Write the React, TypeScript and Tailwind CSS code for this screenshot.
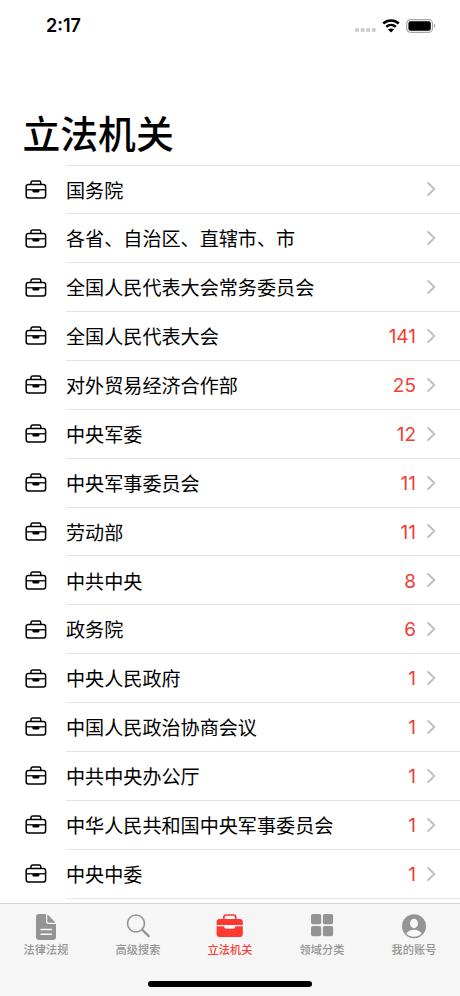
type Organ = { name: string; count?: number };

const Organs: Organ[] = [
  { name: "国务院" },
  { name: "各省、自治区、直辖市、市" },
  { name: "全国人民代表大会常务委员会" },
  { name: "全国人民代表大会", count: 141 },
  { name: "对外贸易经济合作部", count: 25 },
  { name: "中央军委", count: 12 },
  { name: "中央军事委员会", count: 11 },
  { name: "劳动部", count: 11 },
  { name: "中共中央", count: 8 },
  { name: "政务院", count: 6 },
  { name: "中央人民政府", count: 1 },
  { name: "中国人民政治协商会议", count: 1 },
  { name: "中共中央办公厅", count: 1 },
  { name: "中华人民共和国中央军事委员会", count: 1 },
  { name: "中央中委", count: 1 },
];

const BriefcaseIcon = () => (
  <svg width="22" height="20" viewBox="0 0 22 20" fill="none" stroke="black" strokeWidth="1.5">
    <rect x="1.2" y="4.6" width="19.4" height="13.4" rx="2.2" />
    <path d="M6 4.4V2.8c0-1.1.6-1.7 1.7-1.7h6.4c1.1 0 1.7.6 1.7 1.7v1.6" />
    <path d="M1.2 9.8h19.4" strokeWidth="1.3" />
    <path d="M7.4 9.8h7v1.5c0 .7-.4 1.1-1.1 1.1H8.5c-.7 0-1.1-.4-1.1-1.1z" fill="black" stroke="none" />
  </svg>
);

const Chevron = () => (
  <svg width="9" height="14" viewBox="0 0 9 14" fill="none" stroke="#c0c0c3" strokeWidth="2">
    <path d="M1.2 1l6.1 6-6.1 6" strokeLinecap="round" strokeLinejoin="round" />
  </svg>
);

const StatusBar = () => (
  <div className="flex h-[52px] shrink-0 items-center justify-between pr-6 pl-[46px]">
    <span className="text-[18px] leading-none font-semibold">2:17</span>
    <div className="flex items-center">
      <svg width="22" height="6" viewBox="0 0 22 6" fill="#cfcfcf" className="mt-[7px] mr-[5px]">
        <rect x="0" y="1" width="4" height="4" rx="1.3" />
        <rect x="5.6" y="1" width="4" height="4" rx="1.3" />
        <rect x="11.2" y="1" width="4" height="4" rx="1.3" />
        <rect x="16.8" y="1" width="4" height="4" rx="1.3" />
      </svg>
      <svg width="18" height="14" viewBox="0 0 18 14" className="mr-[6px]">
        <path d="M1.2 4.5c4.3-4 11.3-4 15.6 0M4.2 7.9c2.8-2.5 6.8-2.5 9.6 0" fill="none" stroke="black" strokeWidth="2.6" />
        <path d="M9 13.6l-3-3.1c1.7-1.5 4.3-1.5 6 0z" />
      </svg>
      <svg width="30" height="14" viewBox="0 0 30 14">
        <rect x="0.7" y="0.7" width="25.8" height="12.6" rx="3.8" fill="none" stroke="#a6a6a6" strokeWidth="1.2" />
        <rect x="2.4" y="2.3" width="22.4" height="9.4" rx="2.2" />
        <path d="M28 4.8c1.8.7 1.8 3.7 0 4.4z" fill="#a6a6a6" />
      </svg>
    </div>
  </div>
);

const OrganRow = ({ name, count }: Organ) => (
  <li className="flex h-[48.89px] items-stretch">
    <div className="flex w-[66px] shrink-0 items-center pl-[25px]">
      <BriefcaseIcon />
    </div>
    <div className="flex flex-1 items-center border-b border-[#e4e4e6] pr-6">
      <span className="flex-1 pt-[3px] text-[19.1px] whitespace-nowrap">{name}</span>
      <span className="mr-[11px] pt-[3px] text-[19px] text-[#f03d35]">{count}</span>
      <Chevron />
    </div>
  </li>
);

const Tabs = [
  {
    label: "法律法规",
    icon: (
      <svg width="20" height="26" viewBox="0 0 20 26">
        <path d="M3 0h7v7.6C10 9 11 10 12.4 10H20v13a3 3 0 0 1-3 3H3a3 3 0 0 1-3-3V3a3 3 0 0 1 3-3z" fill="currentColor" />
        <path d="M11.3.3L19.7 8.8h-7.2c-.8 0-1.2-.4-1.2-1.2z" fill="currentColor" />
        <path d="M5 15.5h10.5M5 20.3h10.5" stroke="#f6f6f6" strokeWidth="1.5" strokeLinecap="round" />
      </svg>
    ),
  },
  {
    label: "高级搜索",
    icon: (
      <svg width="24" height="26" viewBox="0 0 24 26" fill="none" stroke="currentColor">
        <circle cx="10" cy="9.5" r="8.5" strokeWidth="1.6" />
        <path d="M16.3 15.8l6.4 6.3" strokeWidth="2.3" strokeLinecap="round" />
      </svg>
    ),
  },
  {
    label: "立法机关",
    icon: (
      <svg width="28" height="26" viewBox="0 0 28 26">
        <path d="M7.8 5.5V3.6C7.8 2 8.7 1 10.3 1h7c1.6 0 2.5 1 2.5 2.6v1.9" fill="none" stroke="currentColor" strokeWidth="1.7" />
        <path d="M3.6 5H23.8a3 3 0 0 1 3 3v3H.6V8a3 3 0 0 1 3-3zM.6 12.2h7.6v.5c0 1.2.8 2 2.2 2h6.6c1.4 0 2.2-.8 2.2-2v-.5h7.6V20a3 3 0 0 1-3 3H3.6a3 3 0 0 1-3-3z" fill="currentColor" />
      </svg>
    ),
  },
  {
    label: "领域分类",
    icon: (
      <svg width="23" height="26" viewBox="0 0 23 26" fill="currentColor">
        <rect x="0" y="0" width="10.2" height="10.2" rx="1.8" />
        <rect x="11.9" y="0" width="10.2" height="10.2" rx="1.8" />
        <rect x="0" y="12" width="10.2" height="10.2" rx="1.8" />
        <rect x="11.9" y="12" width="10.2" height="10.2" rx="1.8" />
      </svg>
    ),
  },
  {
    label: "我的账号",
    icon: (
      <svg width="24" height="26" viewBox="0 0 24 26">
        <circle cx="12" cy="12.2" r="12" fill="currentColor" />
        <ellipse cx="12" cy="9.5" rx="4" ry="4.7" fill="#f6f6f6" />
        <path d="M4.3 19.6c1.3-2.6 4.2-3.9 7.7-3.9s6.4 1.3 7.7 3.9a10.7 10.7 0 0 1-15.4 0z" fill="#f6f6f6" />
      </svg>
    ),
  },
];

const TabBar = () => (
  <nav className="flex h-[93px] shrink-0 flex-col items-center justify-between border-t border-[#d3d3d5] bg-[#f6f6f6] pb-[9px]">
    <div className="flex w-full pt-[10px]">
      {Tabs.map((tab) => (
        <button
          key={tab.label}
          className={`flex w-[92px] flex-col items-center font-medium ${
            tab.label === "立法机关" ? "text-[#ff3830]" : "text-[#949494]"
          }`}
        >
          {tab.icon}
          <span className="mt-[2px] text-[11.2px] leading-4">{tab.label}</span>
        </button>
      ))}
    </div>
    <div className="h-[6px] w-[164px] rounded-full bg-black" />
  </nav>
);

const App = () => {
  return (
    <div className="flex h-[996px] w-[460px] flex-col overflow-hidden bg-white font-['Inter','Noto_Sans_CJK_SC',sans-serif] text-black">
      <StatusBar />
      <h1 className="mt-[53px] flex h-[60px] shrink-0 items-center pl-[22.5px] text-[37.8px] leading-none font-medium">
        立法机关
      </h1>
      <main className="min-h-0 flex-1 overflow-hidden">
        <div className="ml-[66px] border-t border-[#e4e4e6]" />
        <ul className="-mt-[0.6px]">
          {Organs.map((organ) => (
            <OrganRow key={organ.name} name={organ.name} count={organ.count} />
          ))}
        </ul>
      </main>
      <TabBar />
    </div>
  );
};

export default App;
